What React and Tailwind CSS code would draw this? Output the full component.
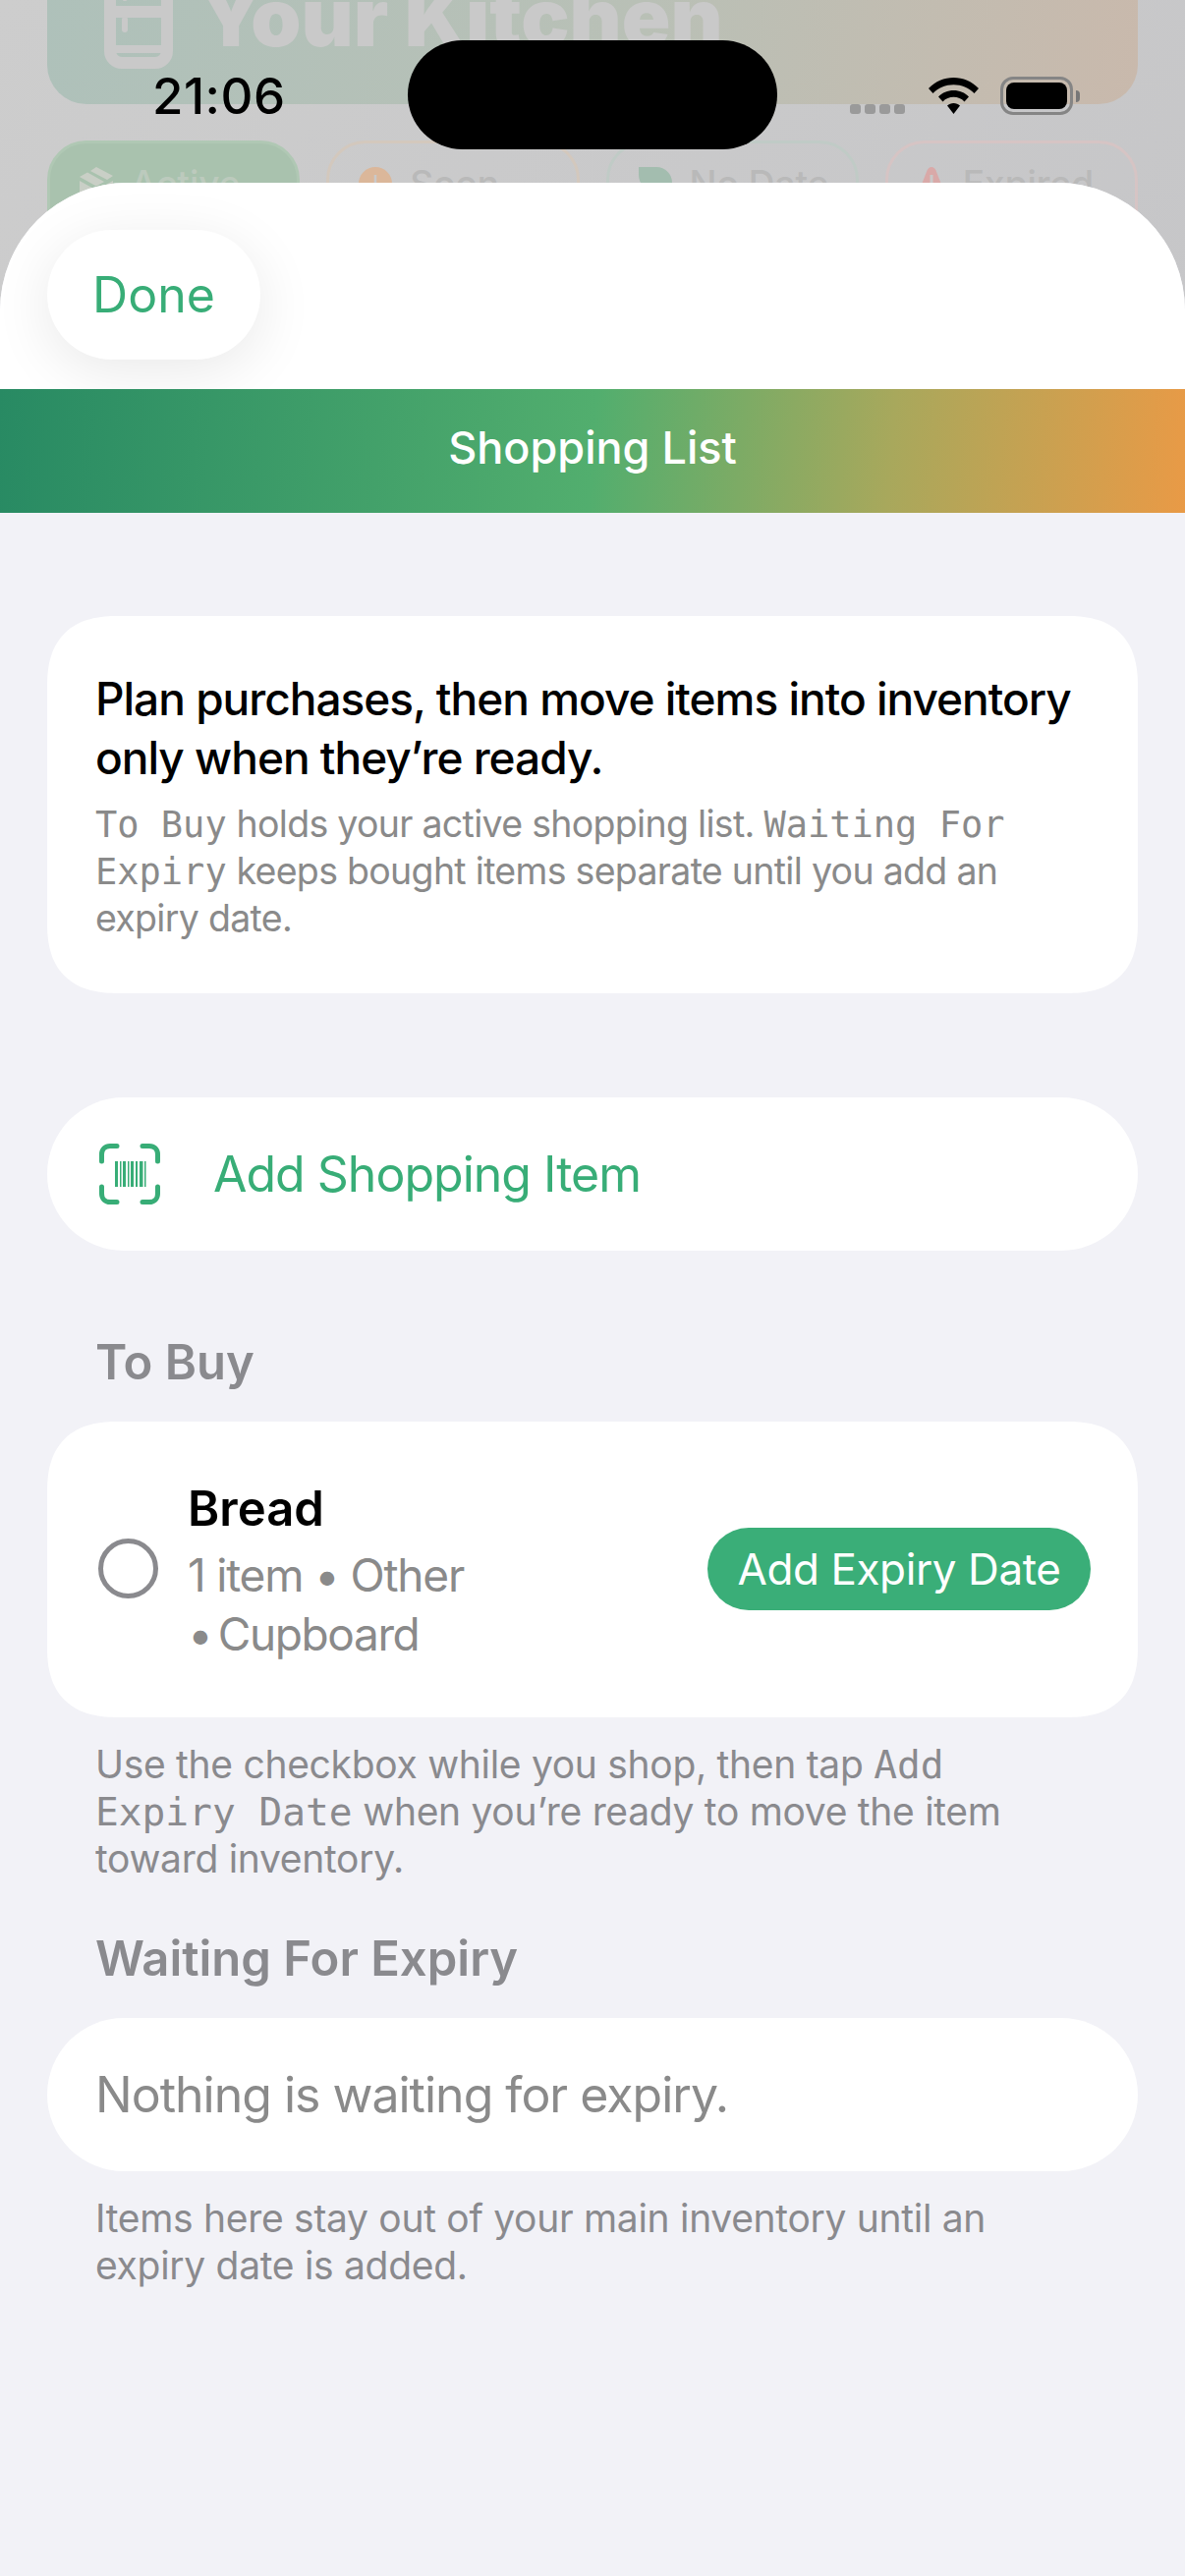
const Mono = ({ children, size = 'text-[37px]' }) => (
    <span className={`font-['DejaVu_Sans_Mono',monospace] leading-none tracking-normal ${size}`}>{children}</span>
);

const BarcodeIcon = () => (
    <svg width="62" height="62" viewBox="0 0 62 62" fill="none" stroke="#38ad77" strokeWidth="5" strokeLinecap="round">
        <path d="M2.5 18V11C2.5 6 6 2.5 11 2.5H18" />
        <path d="M44 2.5H51C56 2.5 59.5 6 59.5 11V18" />
        <path d="M2.5 44V51C2.5 56 6 59.5 11 59.5H18" />
        <path d="M44 59.5H51C56 59.5 59.5 56 59.5 51V44" />
        <g stroke="none" fill="#38ad77">
            <rect x="16" y="18" width="3" height="26" />
            <rect x="21" y="18" width="1.5" height="26" />
            <rect x="24" y="18" width="3" height="26" />
            <rect x="29" y="18" width="1.5" height="26" />
            <rect x="32" y="18" width="3" height="26" />
            <rect x="37" y="18" width="2" height="26" />
            <rect x="41" y="18" width="3.5" height="26" />
            <rect x="46" y="18" width="1.5" height="26" />
        </g>
    </svg>
);

const FridgeIcon = () => (
    <svg width="70" height="170" viewBox="0 0 70 170" fill="none" stroke="#c9c9c9" strokeWidth="12">
        <rect x="6" y="6" width="58" height="158" rx="12" />
        <path d="M6 112H64" />
        <path d="M6 150H64" strokeWidth="8" />
        <path d="M21 120V130" strokeLinecap="round" strokeWidth="6" />
        <path d="M21 88V98" strokeLinecap="round" strokeWidth="6" />
    </svg>
);

const WifiIcon = () => (
    <svg width="51" height="37" viewBox="0 0 51 37">
        <path d="M25.5 0C35 0 44 3.8 51 11L46.5 16C41 10.5 33.5 7.2 25.5 7.2S10 10.5 4.5 16L0 11C7 3.8 16 0 25.5 0Z" fill="#000" />
        <path d="M25.5 13C31.5 13 37 15.3 41 19.5L36.5 24.4C33.5 21.4 29.7 19.8 25.5 19.8S17.5 21.4 14.5 24.4L10 19.5C14 15.3 19.5 13 25.5 13Z" fill="#000" />
        <path d="M25.5 26C28 26 30.3 27 32 28.6L25.5 37L19 28.6C20.7 27 23 26 25.5 26Z" fill="#000" />
    </svg>
);

const BoxIcon = () => (
    <svg width="34" height="40" viewBox="0 0 34 40" fill="#c9cfc6">
        <path d="M17 0L34 9L28 13L11 4Z" />
        <path d="M8 5.5L25 15L17 19.5L0 10Z" />
        <path d="M0 14L16 23V40L0 31Z" />
        <path d="M34 14V31L18 40V23Z" />
    </svg>
);

const ClockIcon = () => (
    <svg width="34" height="40" viewBox="0 0 34 40">
        <circle cx="17" cy="17" r="17" fill="#dbb79a" />
        <path d="M17 8V22" stroke="#c9c9c9" strokeWidth="2.5" />
    </svg>
);

const LeafIcon = () => (
    <svg width="34" height="40" viewBox="0 0 34 40">
        <path d="M0 0H18C27 0 34 7 34 16V24H16C7 24 0 17 0 8Z" fill="#a3bdaf" />
    </svg>
);

const AlertIcon = () => (
    <svg width="28" height="40" viewBox="0 0 28 40">
        <path d="M14 0C16 0 17.5 1.5 18.5 3.5L28 28H0L9.5 3.5C10.5 1.5 12 0 14 0Z" fill="#d9a9a8" />
        <path d="M14 8V22" stroke="#c9c9c9" strokeWidth="3" />
    </svg>
);

const StatusBar = () => (
    <div className="absolute top-0 left-0 w-full h-[160px]">
        <span className="absolute left-[155px] top-[68px] text-[51px] leading-[60px] font-medium text-black tracking-[0.5px]">21:06</span>
        <div className="absolute left-[415px] top-[41px] w-[376px] h-[111px] rounded-[56px] bg-black" />
        <div className="absolute left-[865px] top-[106px] flex gap-[4px]">
            {[0, 1, 2, 3].map(i => (
                <div key={i} className="w-[11px] h-[10px] rounded-[3px] bg-[#9a9a9a]" />
            ))}
        </div>
        <div className="absolute left-[945px] top-[79px]"><WifiIcon /></div>
        <div className="absolute left-[1018px] top-[78px] flex items-center gap-[3px]">
            <div className="w-[74px] h-[39px] rounded-[13px] border-[3px] border-[#858585] p-[3px]">
                <div className="w-full h-full rounded-[8px] bg-black" />
            </div>
            <div className="w-[4px] h-[12px] rounded-r-[4px] bg-[#777777]" />
        </div>
    </div>
);

const Pill = ({ icon, label, className, textClass }) => (
    <div className={`h-[120px] rounded-[40px] border-[3px] flex items-start gap-[18px] pt-[24px] pl-[30px] ${className}`}>
        {icon}
        <span className={`-mt-[7px] text-[37px] leading-[48px] font-medium ${textClass}`}>{label}</span>
    </div>
);

const Backdrop = () => (
    <div className="h-[330px] px-[48px] bg-[linear-gradient(135deg,#cdcdcd,#c6c6c8)] overflow-hidden">
        <div className="-mt-[100px] h-[206px] pl-[58px] rounded-[40px] flex items-start gap-[27px] bg-[linear-gradient(100deg,#aec1ba,#b9c0b6_55%,#c9b9ac)]">
            <FridgeIcon />
            <span className="mt-[63px] text-[82px] leading-[110px] font-black text-[#c9c9c9] whitespace-nowrap">Your Kitchen</span>
        </div>
        <div className="mt-[37px] grid grid-cols-4 gap-[27px]">
            <Pill icon={<BoxIcon />} label="Active" className="bg-[#a9c2ae] border-[#b0c8b4]" textClass="text-[#bccabd]" />
            <Pill icon={<ClockIcon />} label="Soon" className="border-[#d3c8bd]" textClass="text-[#b9b9b9]" />
            <Pill icon={<LeafIcon />} label="No Date" className="border-[#c0cbc6]" textClass="text-[#b9b9b9]" />
            <Pill icon={<AlertIcon />} label="Expired" className="border-[#d6c4c4]" textClass="text-[#b9b9b9]" />
        </div>
    </div>
);

const SectionTitle = ({ children, className }) => (
    <h2 className={`px-[49px] h-[60px] text-[49px] leading-[58px] font-semibold text-[#8a8a8e] ${className}`}>{children}</h2>
);

const Note = ({ children }) => (
    <p className="mt-[24px] px-[49px] text-[39px] leading-[48px] tracking-[-0.3px] text-[#8a8a8e] whitespace-nowrap">{children}</p>
);

export default function App() {
    return (
        <div className="relative w-[1206px] h-[2622px] overflow-hidden bg-[#f2f2f7] font-['Inter','Noto_Sans',sans-serif]">
            <Backdrop />

            <div className="relative -mt-[144px] h-[2436px] rounded-t-[130px] overflow-hidden bg-[#f2f2f7] flex flex-col">
                <div className="h-[210px] shrink-0 bg-white pl-[48px] pt-[48px]">
                    <button className="w-[217px] h-[132px] rounded-[66px] bg-white shadow-[0_12px_60px_rgba(0,0,0,0.09)] text-[50px] text-[#38ad77]">Done</button>
                </div>
                <div className="relative h-[126px] pb-[6px] shrink-0 flex items-center justify-center bg-[linear-gradient(95deg,#288a63,#52ae6e_50%,#a8a85c_75%,#e99a46)]">
                    <span className="text-[45px] font-medium text-white">Shopping List</span>
                </div>

                <main className="px-[48px]">
                    <section className="mt-[105px] h-[384px] rounded-[72px] [corner-shape:superellipse(1.3)] bg-white px-[49px] pt-[54px]">
                        <h1 className="text-[46px] leading-[60px] tracking-[-1px] font-medium text-black whitespace-nowrap">
                            Plan purchases, then move items into inventory<br />only when they’re ready.
                        </h1>
                        <p className="mt-[14px] text-[37.5px] leading-[48px] tracking-[-0.7px] text-[#8a8a8a] whitespace-nowrap">
                            <Mono>To Buy</Mono> holds your active shopping list. <Mono>Waiting For</Mono><br />
                            <Mono>Expiry</Mono> keeps bought items separate until you add an<br />expiry date.
                        </p>
                    </section>

                    <button className="mt-[106px] w-full h-[156px] rounded-[78px] bg-white flex items-center gap-[54px] pl-[53px] text-[#38ad77]">
                        <BarcodeIcon />
                        <span className="text-[50px] tracking-[-1px]">Add Shopping Item</span>
                    </button>

                    <SectionTitle className="mt-[85px]">To Buy</SectionTitle>
                    <section className="mt-[29px] h-[301px] rounded-[72px] [corner-shape:superellipse(1.3)] bg-white flex items-center pl-[52px] pr-[48px]">
                        <div className="-mt-[2px] w-[61px] h-[61px] rounded-full border-[5px] border-[#8a8a8e] shrink-0" />
                        <div className="ml-[30px] flex-1">
                            <div className="mt-[3px] text-[49px] leading-[60px] font-semibold text-black">Bread</div>
                            <div className="mt-[7px] text-[46px] leading-[60px] tracking-[-1.2px] text-[#8a8a8a] whitespace-nowrap">
                                1 item • Other<br /><span className="tracking-[-4px]">• </span><span className="tracking-[-1.4px]">Cupboard</span>
                            </div>
                        </div>
                        <button className="-mt-[2px] w-[390px] h-[84px] rounded-[42px] bg-[#3aae78] text-[44px] tracking-[-0.4px] text-white">Add Expiry Date</button>
                    </section>
                    <Note>
                        Use the checkbox while you shop, then tap <Mono size="text-[39.5px]">Add</Mono><br />
                        <Mono size="text-[39.5px]">Expiry Date</Mono> when you’re ready to move the item<br />toward inventory.
                    </Note>

                    <SectionTitle className="mt-[49px]">Waiting For Expiry</SectionTitle>
                    <section className="mt-[29px] h-[156px] rounded-[78px] bg-white flex items-center px-[49px]">
                        <span className="text-[50px] tracking-[-1px] text-[#8a8a8a]">Nothing is waiting for expiry.</span>
                    </section>
                    <Note>
                        Items here stay out of your main inventory until an<br />expiry date is added.
                    </Note>
                </main>
            </div>

            <StatusBar />
        </div>
    );
}
